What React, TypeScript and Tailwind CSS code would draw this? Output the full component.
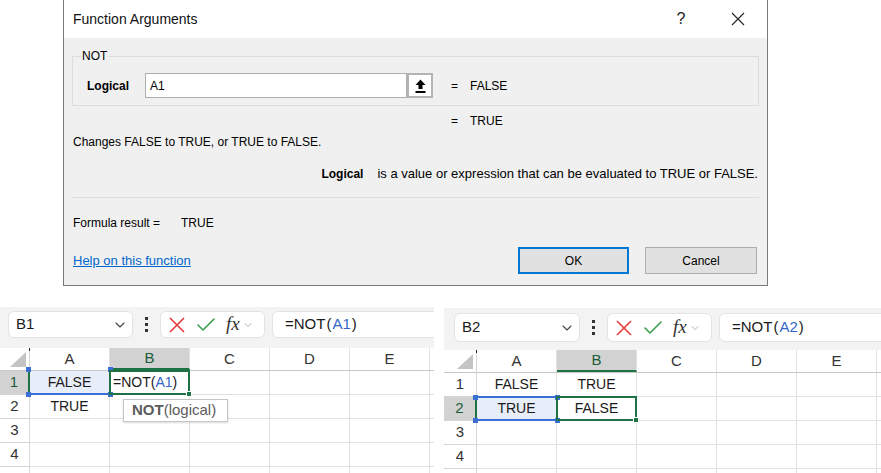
import { Check, ChevronDown } from "lucide-react";
import type { ReactNode } from "react";

const COLS = ["A", "B", "C", "D", "E", ""];

type SheetProps = {
    name: string;
    formulaRef: string;
    wrap: string;
    bar: string;
    box: string;
    nameBox: string;
    rowHead: string;
    rows: string[][];
    active: [number, number];
    refCell: [number, number];
    refTop: boolean;
    editing?: boolean;
};

function Formula({ cellRef, spaced }: { cellRef: string; spaced?: boolean }) {
    return (
        <span className="whitespace-nowrap">
            =NOT<span className={spaced ? "mx-[1px]" : ""}>(</span>
            <span className="text-[#3566c8]">{cellRef}</span>
            <span className={spaced ? "ml-[1px]" : ""}>)</span>
        </span>
    );
}

function Sheet(p: SheetProps) {
    const [ac, ar] = p.active;
    const [rc, rr] = p.refCell;

    return (
        <div className={`overflow-hidden font-['Liberation_Sans',Arial,sans-serif] text-[#1a1a1a] ${p.wrap}`}>
            {/* formula bar */}
            <div className={`flex items-start bg-[#f3f3f3] ${p.bar}`}>
                <div className={`flex shrink-0 items-center justify-between rounded-md border border-[#e3e3e3] bg-white pl-[7px] pr-[4px] text-[15px] ${p.box} ${p.nameBox}`}>
                    <span>{p.name}</span>
                    <ChevronDown size={16} strokeWidth={1.6} className="text-[#444]" />
                </div>
                <div className={`flex w-[27px] shrink-0 flex-col items-center justify-center gap-[3px] ${p.box}`}>
                    <span className="h-[3px] w-[3px] bg-[#333]" />
                    <span className="h-[3px] w-[3px] bg-[#333]" />
                    <span className="h-[3px] w-[3px] bg-[#333]" />
                </div>
                <div className={`flex w-[105px] shrink-0 items-center rounded-md border border-[#e3e3e3] bg-white pl-[5px] ${p.box}`}>
                    <svg width="22" height="22" viewBox="0 0 22 22" className="shrink-0">
                        <path d="M4 4 L18 18 M18 4 L4 18" stroke="#e5383b" strokeWidth="1.6" fill="none" />
                    </svg>
                    <Check size={24} strokeWidth={1.6} className="ml-[6px] shrink-0 text-[#3aa04f]" />
                    <span className="ml-[8px] font-['Liberation_Serif',serif] text-[19px] italic text-[#333]">fx</span>
                    <ChevronDown size={12} strokeWidth={1.5} className="ml-[2px] shrink-0 text-[#9a9a9a]" />
                </div>
                <div className={`ml-[7px] flex w-[300px] shrink-0 items-center rounded-md border border-[#e3e3e3] bg-white pl-[12px] text-[15px] ${p.box}`}>
                    <Formula cellRef={p.formulaRef} spaced />
                </div>
            </div>

            {/* grid */}
            <div className="relative bg-white">
                <div className="flex h-[23px] border-b border-[#c8c8c8]">
                    <div className={`relative flex shrink-0 items-end justify-end border-r border-[#d6d6d6] pb-[3px] pr-[3px] ${p.rowHead}`}>
                        <span className="absolute right-[-1px] top-0 h-[3px] w-px bg-[#222]" />
                        <svg width="16" height="15" viewBox="0 0 16 15">
                            <path d="M16 0 L16 15 L0 15 Z" fill="#c4c4c4" />
                        </svg>
                    </div>
                    {COLS.map((c, i) => (
                        <div
                            key={i}
                            className={`flex w-[80px] shrink-0 items-center justify-center border-r border-[#e1e1e1] text-[15px] ${
                                i === ac ? "border-b-2 border-b-[#1e7145] bg-[#d2d2d2] text-[#1d5c3a]" : "text-[#333]"
                            }`}
                        >
                            {c}
                        </div>
                    ))}
                </div>
                {[0, 1, 2, 3, 4].map((r) => (
                    <div key={r} className="flex h-[24px]">
                        <div
                            className={`flex shrink-0 items-center justify-center border-b border-r border-[#d6d6d6] text-[15px] ${p.rowHead} ${
                                r === ar ? "border-r-2 border-r-[#1e7145] bg-[#d2d2d2] text-[#1d5c3a]" : "text-[#333]"
                            }`}
                        >
                            {r < 4 ? r + 1 : ""}
                        </div>
                        {COLS.map((_, c) => {
                            const isActive = c === ac && r === ar;
                            const isRef = c === rc && r === rr;
                            let content: ReactNode = p.rows[r]?.[c] ?? "";
                            if (isActive && p.editing) content = <Formula cellRef={p.formulaRef} />;
                            return (
                                <div
                                    key={c}
                                    className={`relative flex w-[80px] shrink-0 items-center border-b border-r border-[#e1e1e1] text-[14px] ${
                                        isActive && p.editing ? "justify-start pl-[3px]" : "justify-center"
                                    } ${isRef ? "bg-[#e8eef9]" : ""}`}
                                >
                                    {content}
                                    {isRef && (
                                        <div className={`absolute -bottom-px -left-px -right-px -top-px z-10 border-b-2 border-[#3a6fd6] ${p.refTop ? "border-t-2" : ""}`}>
                                            <span className="absolute -left-[3px] -top-[3px] h-[5px] w-[5px] bg-[#3a6fd6]" />
                                            <span className="absolute -right-[3px] -top-[3px] h-[5px] w-[5px] bg-[#3a6fd6]" />
                                            <span className="absolute -bottom-[4px] -left-[3px] h-[5px] w-[5px] bg-[#3a6fd6]" />
                                            <span className="absolute -bottom-[4px] -right-[3px] h-[5px] w-[5px] bg-[#3a6fd6]" />
                                        </div>
                                    )}
                                    {isActive && (
                                        <div className="absolute -inset-px z-20 border-2 border-[#1e7145]">
                                            <span className="absolute -bottom-[4px] -right-[4px] h-[6px] w-[6px] border border-white bg-[#1e7145]" />
                                        </div>
                                    )}
                                </div>
                            );
                        })}
                    </div>
                ))}
                {p.editing && (
                    <div className="absolute left-[123px] top-[51px] z-30 flex h-[23px] w-[105px] items-center border border-[#c6c6c6] bg-white pl-[8px] text-[15px] text-[#5b5b5b] shadow-[0_1px_2px_rgba(0,0,0,0.15)]">
                        <span className="font-bold">NOT</span>
                        <span>(logical)</span>
                    </div>
                )}
            </div>
        </div>
    );
}

function Dialog() {
    return (
        <div className="ml-[63px] flex h-[286px] w-[705px] flex-col border border-t-0 border-[#7a7a7a] bg-[#f0f0f0] text-[12px] text-black">
            {/* title bar */}
            <div className="flex h-[38px] shrink-0 items-center bg-white pl-[9px] pr-[21px]">
                <span className="text-[14px] text-[#111]">Function Arguments</span>
                <span className="ml-auto w-[20px] text-center text-[16px] text-[#222]">?</span>
                <svg width="16" height="16" viewBox="0 0 16 16" className="ml-[39px]">
                    <path d="M2 2 L14 14 M14 2 L2 14" stroke="#222" strokeWidth="1.1" fill="none" />
                </svg>
            </div>

            <fieldset className="mx-[8px] mt-[11px] border border-[#dcdcdc] pb-[7px] pl-[8px] pr-[8px]">
                <legend className="px-[1px] leading-[14px]">NOT</legend>
                <div className="mt-[10px] flex h-[25px] items-center pl-[6px]">
                    <span className="w-[58px] font-bold">Logical</span>
                    <div className="flex h-[25px] w-[262px] items-center border border-[#adadad] bg-white pl-[4px]">A1</div>
                    <div className="flex h-[25px] w-[26px] items-center justify-center border-2 border-[#b4b4b4] bg-white">
                        <svg width="11" height="14" viewBox="0 0 11 14">
                            <path d="M5.5 0.5 L10.5 6 L7.5 6 L7.5 10 L3.5 10 L3.5 6 L0.5 6 Z" fill="#000" />
                            <rect x="0.5" y="12" width="10" height="2" fill="#000" />
                        </svg>
                    </div>
                    <span className="ml-[18px] w-[19px]">=</span>
                    <span>FALSE</span>
                </div>
            </fieldset>

            <div className="mt-[8px] flex h-[14px] items-center pl-[387px]">
                <span className="w-[19px]">=</span>
                <span>TRUE</span>
            </div>
            <div className="mt-[7px] flex h-[14px] items-center pl-[9px]">Changes FALSE to TRUE, or TRUE to FALSE.</div>
            <div className="mt-[18px] flex h-[14px] items-center justify-end gap-[14px] pr-[9px]">
                <span className="font-bold">Logical</span>
                <span className="text-[13px]">is a value or expression that can be evaluated to TRUE or FALSE.</span>
            </div>
            <div className="mx-[8px] mt-[16px] h-px bg-[#dcdcdc]" />
            <div className="mt-[18px] flex h-[14px] items-center pl-[9px]">
                <span>Formula result =</span>
                <span className="ml-[21px]">TRUE</span>
            </div>
            <div className="mt-[17px] flex items-center pl-[9px] pr-[10px]">
                <span className="text-[13px] text-[#0066cc] underline">Help on this function</span>
                <button className="ml-auto h-[27px] w-[111px] border-2 border-[#0078d7] bg-[#e1e1e1]">OK</button>
                <button className="ml-[16px] h-[27px] w-[112px] border border-[#adadad] bg-[#e1e1e1]">Cancel</button>
            </div>
        </div>
    );
}

export default function App() {
    return (
        <div className="h-[473px] w-[881px] overflow-hidden bg-white font-['Liberation_Sans',Arial,sans-serif]">
            <Dialog />
            <div className="flex items-start">
                <Sheet
                    name="B1"
                    formulaRef="A1"
                    wrap="mt-[21px] w-[434px] shrink-0 h-[166px]"
                    bar="h-[41px] pt-[4px]"
                    box="h-[27px]"
                    nameBox="ml-[8px] w-[125px]"
                    rowHead="w-[30px]"
                    rows={[["FALSE", ""], ["TRUE", ""]]}
                    active={[1, 0]}
                    refCell={[0, 0]}
                    refTop={false}
                    editing
                />
                <Sheet
                    name="B2"
                    formulaRef="A2"
                    wrap="ml-[10px] mt-[22px] flex-1 h-[165px]"
                    bar="h-[42px] pt-[5px]"
                    box="h-[29px]"
                    nameBox="ml-[10px] w-[126px]"
                    rowHead="w-[33px]"
                    rows={[["FALSE", "TRUE"], ["TRUE", "FALSE"]]}
                    active={[1, 1]}
                    refCell={[0, 1]}
                    refTop
                />
            </div>
        </div>
    );
}
